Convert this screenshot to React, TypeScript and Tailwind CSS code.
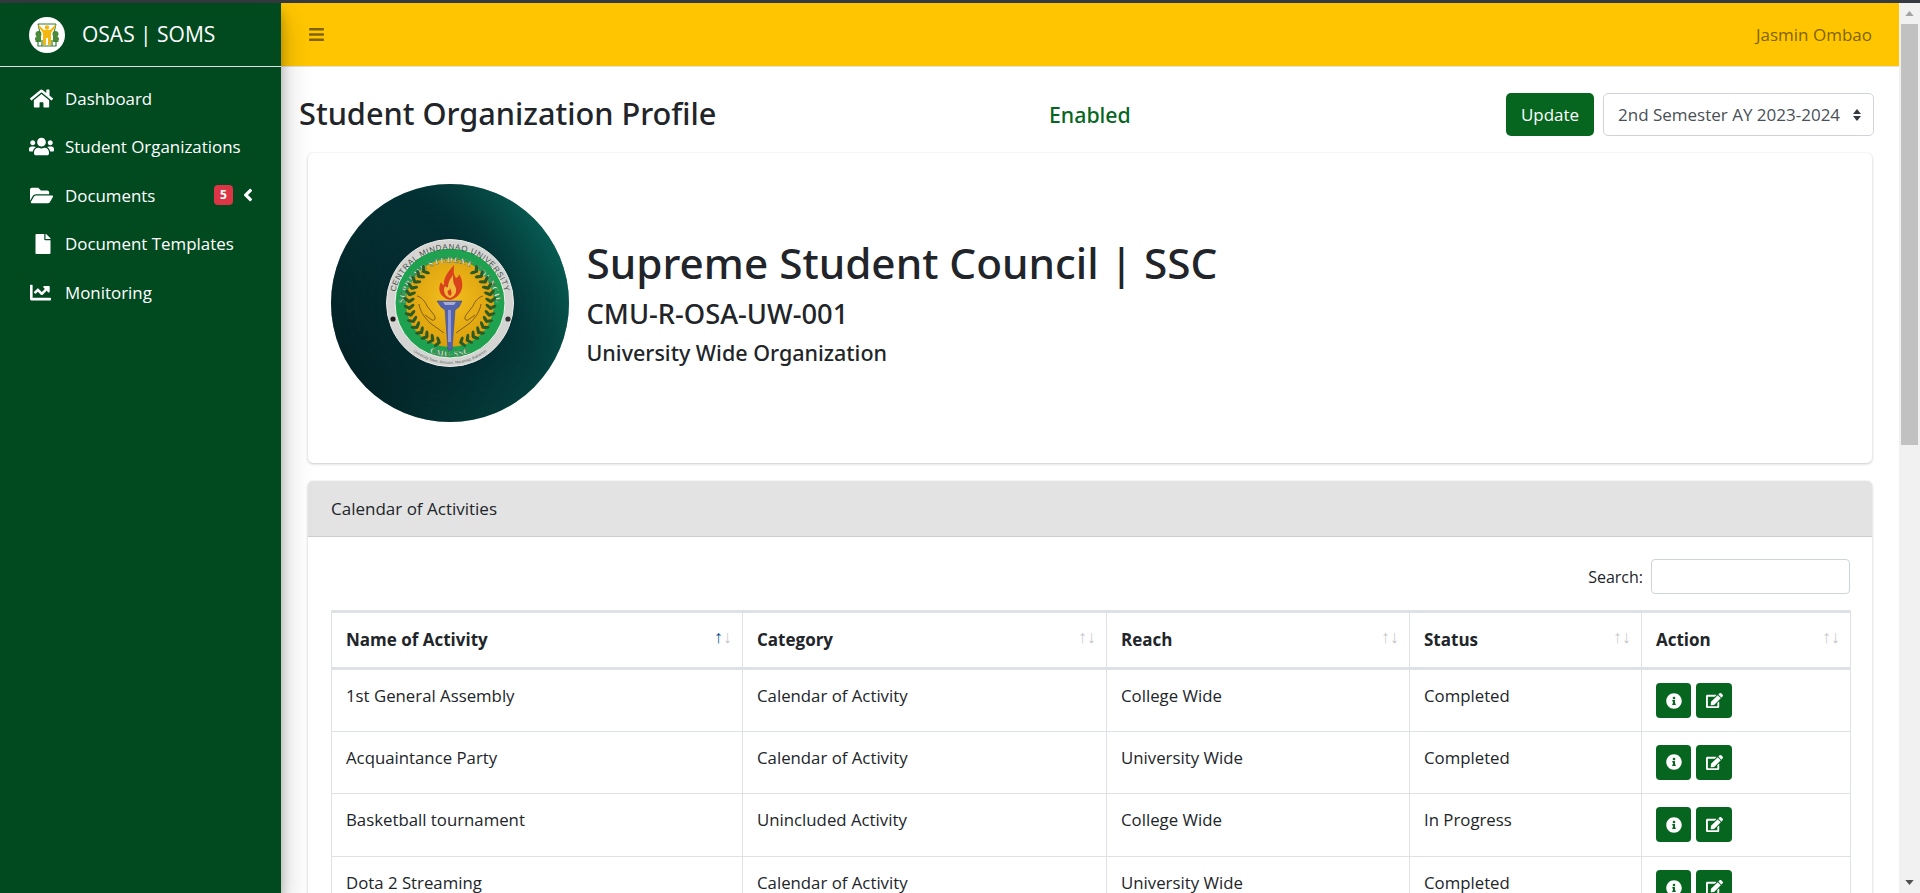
import { FaBars, FaChartLine, FaEdit, FaFile, FaFolderOpen, FaHome, FaInfoCircle, FaUsers, FaAngleLeft } from "react-icons/fa";

const rows = [
  ["1st General Assembly", "Calendar of Activity", "College Wide", "Completed"],
  ["Acquaintance Party", "Calendar of Activity", "University Wide", "Completed"],
  ["Basketball tournament", "Unincluded Activity", "College Wide", "In Progress"],
  ["Dota 2 Streaming", "Calendar of Activity", "University Wide", "Completed"],
];

const columns = [
  { label: "Name of Activity", width: "w-[411px]", active: true },
  { label: "Category", width: "w-[364px]", active: false },
  { label: "Reach", width: "w-[303px]", active: false },
  { label: "Status", width: "w-[232px]", active: false },
  { label: "Action", width: "w-[209px]", active: false },
];

function BrandLogo() {
  return (
    <svg viewBox="0 0 36 36" className="w-9 h-9 shrink-0">
      <circle cx="18" cy="18" r="18" fill="#fff" />
      <path d="M9 19c-3 0-4 4-2 5l-1 1h6v-6zM27 19c3 0 4 4 2 5l1 1h-6v-6z" fill="#4c8a3a" />
      <circle cx="9.5" cy="17" r="3" fill="#4c8a3a" />
      <circle cx="26.5" cy="17" r="3" fill="#4c8a3a" />
      <path d="M9 7h18M9 7l2 9M27 7l-2 9" fill="none" stroke="#2f7d33" strokeWidth="1" />
      <circle cx="18" cy="10.5" r="2.2" fill="#f5b60d" />
      <path d="M10 8l5 5h6l5-5 1 1-5 7v12h-3v-7h-2v7h-3V16L9 9z" fill="#f5b60d" />
      <path d="M9 23v6h18v-6M13 23v6M23 23v6" fill="none" stroke="#2f7d33" strokeWidth="1.2" />
    </svg>
  );
}

function Seal() {
  const leaves = Array.from({ length: 14 }, (_, i) => i);
  const grooves = [70, 78, 86, 94, 102, 110];
  return (
    <svg viewBox="0 0 238 238" className="w-[238px] h-[238px] shrink-0">
      <defs>
        <radialGradient id="disc" cx="34%" cy="46%" r="78%">
          <stop offset="0%" stopColor="#03292e" />
          <stop offset="50%" stopColor="#032e31" />
          <stop offset="80%" stopColor="#043f3c" />
          <stop offset="100%" stopColor="#06584e" />
        </radialGradient>
        <linearGradient id="shade" x1="100%" y1="18%" x2="5%" y2="80%">
          <stop offset="0%" stopColor="#0a7868" stopOpacity="0.75" />
          <stop offset="42%" stopColor="#04383a" stopOpacity="0.1" />
          <stop offset="100%" stopColor="#021418" stopOpacity="0.55" />
        </linearGradient>
        <radialGradient id="gold" cx="50%" cy="45%" r="55%">
          <stop offset="0%" stopColor="#f3bf1e" />
          <stop offset="100%" stopColor="#dc9f0c" />
        </radialGradient>
        <path id="outerArc" d="M62.5 122a56.5 56.5 0 1 1 113 0" />
        <path id="innerArc" d="M72.5 125a46.5 46.5 0 1 1 93 0" />
        <path id="bottomArc" d="M66 149A61 61 0 0 0 172 149" />
        <path id="sscArc" d="M80 156A54 54 0 0 0 158 156" />
      </defs>
      <circle cx="119" cy="119" r="119" fill="url(#disc)" />
      <circle cx="119" cy="119" r="119" fill="url(#shade)" />
      {grooves.map((r) => (
        <circle key={r} cx="119" cy="119" r={r} fill="none" stroke="#ffffff" strokeOpacity="0.012" strokeWidth="1" />
      ))}
      <circle cx="119" cy="119" r="63.5" fill="#d4d5d2" stroke="#ecece9" strokeWidth="1" />
      <circle cx="119" cy="119" r="55" fill="#1fa24f" stroke="#f3f3ee" strokeWidth="1" />
      <circle cx="119" cy="119" r="44" fill="url(#gold)" />
      <circle cx="62" cy="135" r="2.6" fill="#1c1c1c" />
      <circle cx="177" cy="135" r="2.6" fill="#333333" />
      <text fontSize="8" fill="#4b4f4d" fontFamily="Liberation Sans, sans-serif" letterSpacing="0.6">
        <textPath href="#outerArc" startOffset="50%" textAnchor="middle">CENTRAL MINDANAO UNIVERSITY</textPath>
      </text>
      <text fontSize="8" fontWeight="700" fill="#f7f7e8" stroke="#173a1e" strokeWidth="0.25" fontFamily="Liberation Serif, serif" letterSpacing="0.7">
        <textPath href="#innerArc" startOffset="50%" textAnchor="middle">SUPREME STUDENT COUNCIL</textPath>
      </text>
      <text fontSize="3.8" fill="#55605a" fontFamily="Liberation Sans, sans-serif">
        <textPath href="#bottomArc" startOffset="50%" textAnchor="middle">University Town, Musuan, Maramag, Bukidnon</textPath>
      </text>
      <text fontSize="8" fontWeight="700" fill="#f7f7e8" stroke="#173a1e" strokeWidth="0.25" fontFamily="Liberation Serif, serif" letterSpacing="0.8">
        <textPath href="#sscArc" startOffset="50%" textAnchor="middle">CMU-SSC</textPath>
      </text>
      {leaves.map((i) => {
        const angle = i * 9.6 - 52;
        const a = (angle * Math.PI) / 180;
        const x = 119 + 39 * Math.cos(a);
        const y = 119 + 39 * Math.sin(a);
        const x2 = 119 + 43 * Math.cos(a);
        const y2 = 119 + 43 * Math.sin(a);
        return (
          <g key={i} fill="#2b5a24">
            <ellipse cx={x} cy={y} rx="1.6" ry="4" transform={`rotate(${angle + 125} ${x} ${y})`} />
            <ellipse cx={x2} cy={y2} rx="1.6" ry="4" transform={`rotate(${angle + 55} ${x2} ${y2})`} />
            <ellipse cx={238 - x} cy={y} rx="1.6" ry="4" transform={`rotate(${-angle - 125} ${238 - x} ${y})`} />
            <ellipse cx={238 - x2} cy={y2} rx="1.6" ry="4" transform={`rotate(${-angle - 55} ${238 - x2} ${y2})`} />
          </g>
        );
      })}
      <g fill="none" stroke="#3a2c0c" strokeWidth="0.6">
        <path d="M86 112c4 1 8 5 10 10l7 9c2 3 1 6-2 5l-7-5M88 120c1 7 5 13 11 19l14 10" />
        <path d="M152 112c-4 1-8 5-10 10l-7 9c-2 3-1 6 2 5l7-5M150 120c-1 7-5 13-11 19l-14 10" />
      </g>
      <path d="M106 117h25l-3 6-4 3-3 40h-4l-3-40-4-3z" fill="#5463ae" stroke="#3a4388" strokeWidth="0.5" />
      <path d="M112 118h13l-2 3h-9z" fill="#a4acd4" />
      <path d="M117 126h3v32h-3z" fill="#8f9ad4" />
      <path d="M119 116c-10-2-13-11-9-18 1 2 2 3 3 3-1-8 5-14 10-20 0 6-1 9 2 13 2-1 3-2 3-4 5 7 6 22-9 26z" fill="#d9431b" />
      <path d="M119 114c-6-2-7-8-5-12 1 1 2 2 3 1 0-5 3-9 5-12 0 5 0 8 2 11 2 3 2 10-5 12z" fill="#f0b93a" />
      <path d="M119 112c-2-1-3-4-2-6 1 1 2 0 2-2 1 2 3 6 0 8z" fill="#d9431b" />
    </svg>
  );
}

function SortArrows({ active }: { active: boolean }) {
  return (
    <span className="absolute right-[10px] top-[14px] text-[18px] leading-none text-[#212529] font-normal">
      <span className={active ? "text-[#0b4f8a]" : "opacity-25"}>↑</span>
      <span className="opacity-25">↓</span>
    </span>
  );
}

function ActionButton({ wide, children }: { wide?: boolean; children: React.ReactNode }) {
  return (
    <button className={`${wide ? "w-9" : "w-[35px]"} h-[35px] flex items-center justify-center rounded-[4px] bg-[#06661f] text-white text-[15px]`}>
      {children}
    </button>
  );
}

function NavItem({ icon, label, children }: { icon: React.ReactNode; label: string; children?: React.ReactNode }) {
  return (
    <a className="h-[48.6px] flex items-center text-white text-[16.9px]">
      <span className="w-[65px] pl-[30px] flex justify-start text-[23px]">{icon}</span>
      <span>{label}</span>
      {children}
    </a>
  );
}

export default function App() {
  return (
    <div className="h-screen w-full overflow-hidden flex flex-col bg-white text-[#212529] font-['Open_Sans','Noto_Sans',sans-serif]">
      <div className="h-[3px] bg-[#343a40] shrink-0" />
      <div className="flex flex-1 min-h-0">
        <aside className="relative z-10 w-[281px] shrink-0 bg-[#014a20] shadow-[0_14px_28px_rgba(0,0,0,0.25),0_10px_10px_rgba(0,0,0,0.22)]">
          <div className="h-[64px] flex items-center gap-[17px] pl-[29px] border-b border-[#dee2e6]">
            <BrandLogo />
            <span className="text-white text-[21px]">OSAS | SOMS</span>
          </div>
          <nav className="pt-[7px]">
            <NavItem icon={<FaHome />} label="Dashboard" />
            <NavItem icon={<FaUsers className="-ml-[1px] text-[25px]" />} label="Student Organizations" />
            <NavItem icon={<FaFolderOpen />} label="Documents">
              <span className="ml-auto w-[19px] h-[20px] flex items-center justify-center rounded-[4px] bg-[#dc3545] text-[12px] font-bold">5</span>
              <FaAngleLeft className="ml-[5px] mr-[23px] text-[20px]" />
            </NavItem>
            <NavItem icon={<FaFile className="ml-[3px] text-[20px]" />} label="Document Templates" />
            <NavItem icon={<FaChartLine className="text-[21px]" />} label="Monitoring" />
          </nav>
        </aside>

        <div className="flex-1 min-w-0 flex flex-col">
          <header className="h-[64px] shrink-0 flex items-center justify-between pl-[27px] pr-[27px] bg-[#ffc600] border-b border-[#dee2e6] text-[#806300]">
            <FaBars className="text-[17px]" />
            <span className="text-[17px]">Jasmin Ombao</span>
          </header>

          <main className="flex-1 min-h-0 overflow-hidden pl-[18px] pr-[25px]">
            <div className="h-[43px] mt-[26px] flex items-center">
              <h1 className="w-[750px] -mt-[2px] text-[30.7px] font-['Noto_Sans'] font-medium leading-none">Student Organization Profile</h1>
              <span className="text-[21.3px] font-['Noto_Sans'] font-medium text-[#06661f]">Enabled</span>
              <button className="ml-auto h-[43px] w-[88px] rounded-[5px] bg-[#06661f] text-white text-[17px]">Update</button>
              <div className="ml-[9px] h-[43px] w-[271px] flex items-center justify-between pl-[14px] pr-[12px] rounded-[5px] border border-[#ced4da] text-[#495057] text-[17px]">
                <span>2nd Semester AY 2023-2024</span>
                <svg viewBox="0 0 8 12" className="w-2 h-3">
                  <path d="M4 0l4 5H0zM4 12L0 7h8z" fill="#343a40" />
                </svg>
              </div>
            </div>

            <section className="ml-[9px] mr-[2px] mt-[17px] h-[310px] flex items-center gap-[17.5px] pl-[23px] pb-[10px] rounded-[5px] bg-white shadow-[0_0_1px_rgba(0,0,0,0.125),0_1px_3px_rgba(0,0,0,0.2)]">
              <Seal />
              <div className="flex flex-col -mt-[2px]">
                <h2 className="mb-[7px] text-[42.3px] font-['Noto_Sans'] font-medium leading-[52px]">Supreme Student Council | SSC</h2>
                <p className="text-[27.3px] font-['Noto_Sans'] font-medium leading-[36px]">CMU-R-OSA-UW-001</p>
                <p className="mt-[6px] text-[21.5px] font-['Noto_Sans'] font-medium leading-[30px]">University Wide Organization</p>
              </div>
            </section>

            <section className="ml-[9px] mr-[2px] mt-[18px] rounded-[5px] bg-white shadow-[0_0_1px_rgba(0,0,0,0.125),0_1px_3px_rgba(0,0,0,0.2)]">
              <div className="h-[56px] flex items-center pl-[23px] rounded-t-[5px] bg-[#e3e3e3] border-b border-[#cccccc] text-[17px]">
                Calendar of Activities
              </div>
              <div className="pl-[23px] pr-[22px] pt-[22px]">
                <label className="flex items-center justify-end gap-2 text-[16px]">
                  Search:
                  <input className="w-[199px] h-[35px] rounded-[4px] border border-[#ced4da]" />
                </label>
                <table className="mt-[16px] w-[1519px] table-fixed border-collapse text-[16.8px]">
                  <thead>
                    <tr className="h-[57px]">
                      {columns.map((c) => (
                        <th key={c.label} className={`${c.width} relative pl-[14px] text-left text-[17px] font-bold border border-[#dee2e6] border-t-[3px] border-b-[3px]`}>
                          {c.label}
                          <SortArrows active={c.active} />
                        </th>
                      ))}
                    </tr>
                  </thead>
                  <tbody>
                    {rows.map((r) => (
                      <tr key={r[0]} className="h-[62.7px]">
                        {r.map((cell) => (
                          <td key={cell} className="pl-[14px] pt-[13px] align-top border border-[#dee2e6]">
                            {cell}
                          </td>
                        ))}
                        <td className="pl-[14px] pt-[13px] align-top border border-[#dee2e6]">
                          <div className="flex gap-[5px]">
                            <ActionButton><FaInfoCircle className="text-[16px]" /></ActionButton>
                            <ActionButton wide><FaEdit className="text-[17px]" /></ActionButton>
                          </div>
                        </td>
                      </tr>
                    ))}
                  </tbody>
                </table>
              </div>
            </section>
          </main>
        </div>

        <div className="w-[21px] shrink-0 flex flex-col items-center bg-[#f1f1f1]">
          <svg viewBox="0 0 10 6" className="w-[9px] h-[5px] mt-[8px] mb-[8px]">
            <path d="M5 0l5 6H0z" fill="#a3a3a3" />
          </svg>
          <div className="w-[17px] h-[421px] bg-[#c1c1c1]" />
          <svg viewBox="0 0 10 6" className="w-[9px] h-[5px] mt-auto mb-[8px]">
            <path d="M5 6L0 0h10z" fill="#505050" />
          </svg>
        </div>
      </div>
    </div>
  );
}
